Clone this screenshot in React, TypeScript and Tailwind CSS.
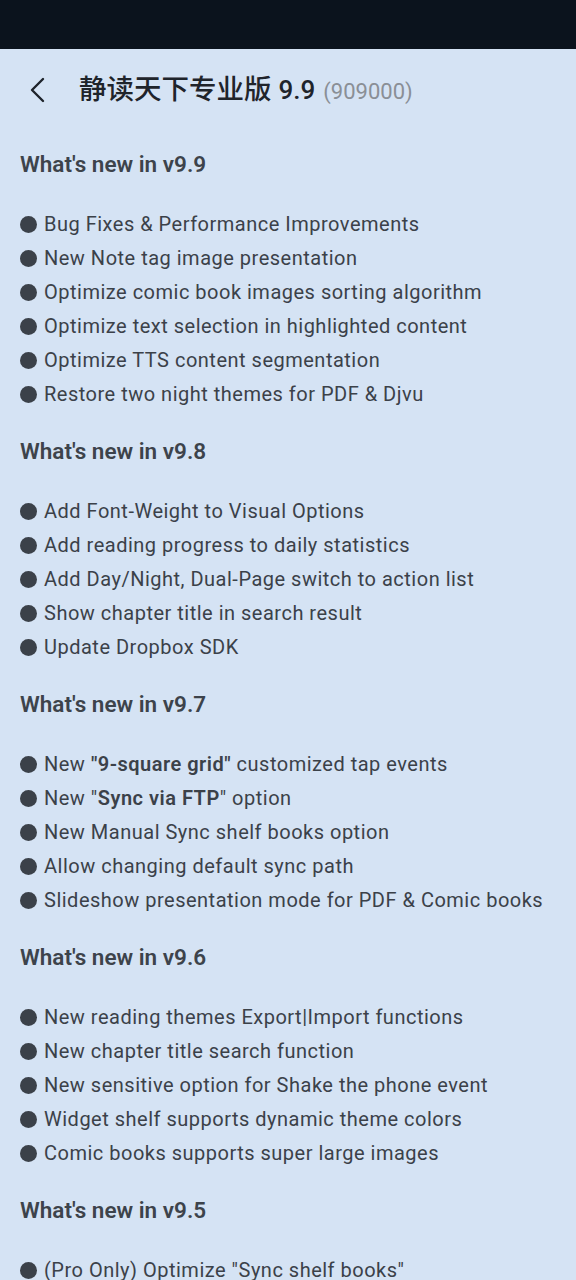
import { ReactNode } from "react";

type Section = { version: string; items: ReactNode[] };

const sections: Section[] = [
  {
    version: "v9.9",
    items: [
      "Bug Fixes & Performance Improvements",
      "New Note tag image presentation",
      "Optimize comic book images sorting algorithm",
      "Optimize text selection in highlighted content",
      "Optimize TTS content segmentation",
      "Restore two night themes for PDF & Djvu",
    ],
  },
  {
    version: "v9.8",
    items: [
      "Add Font-Weight to Visual Options",
      "Add reading progress to daily statistics",
      "Add Day/Night, Dual-Page switch to action list",
      "Show chapter title in search result",
      "Update Dropbox SDK",
    ],
  },
  {
    version: "v9.7",
    items: [
      <>
        New <b className="font-semibold">"9-square grid"</b> customized tap events
      </>,
      <>
        New "<b className="font-semibold">Sync via FTP</b>" option
      </>,
      "New Manual Sync shelf books option",
      "Allow changing default sync path",
      "Slideshow presentation mode for PDF & Comic books",
    ],
  },
  {
    version: "v9.6",
    items: [
      "New reading themes Export|Import functions",
      "New chapter title search function",
      "New sensitive option for Shake the phone event",
      "Widget shelf supports dynamic theme colors",
      "Comic books supports super large images",
    ],
  },
  {
    version: "v9.5",
    items: ['(Pro Only) Optimize "Sync shelf books"'],
  },
];

export default function App() {
  return (
    <div className="h-[1280px] overflow-hidden bg-[#d5e3f4] font-['Roboto','Noto_Sans_CJK_SC',sans-serif] text-[#3b4149]">
      <div className="h-[49px] bg-[#0b131d]" />
      <header className="flex h-[82px] items-center pb-[1px]">
        <button className="ml-[28px] text-[#1f242b]">
          <svg width="20" height="26" viewBox="0 0 20 26" fill="none">
            <path d="M15 2 L4 13 L15 24" stroke="currentColor" strokeWidth="2.4" strokeLinecap="round" strokeLinejoin="round" />
          </svg>
        </button>
        <h1 className="ml-[31px] flex items-baseline text-[27.5px] font-medium text-[#1f242b]">
          静读天下专业版
          <span className="ml-[7px] text-[26px]">9.9</span>
          <span className="ml-[8px] text-[22px] font-normal text-[#8a8f96]">(909000)</span>
        </h1>
      </header>
      <main className="px-[20px] pt-[16px]">
        {sections.map((s, i) => (
          <section key={s.version}>
            <h2 className={`h-[34px] text-[22.5px] font-semibold leading-[34px] tracking-[0px] text-[#3d434b] ${i > 0 ? "mt-[23px]" : ""}`}>
              What's new in {s.version}
            </h2>
            <ul className="mt-[26px]">
              {s.items.map((it, j) => (
                <li key={j} className="flex h-[34px] items-center text-[20px] tracking-[0.5px]">
                  <span className="mr-[7px] h-[17px] w-[17px] shrink-0 rounded-full bg-[#3b4149]" />
                  <span>{it}</span>
                </li>
              ))}
            </ul>
          </section>
        ))}
      </main>
    </div>
  );
}
